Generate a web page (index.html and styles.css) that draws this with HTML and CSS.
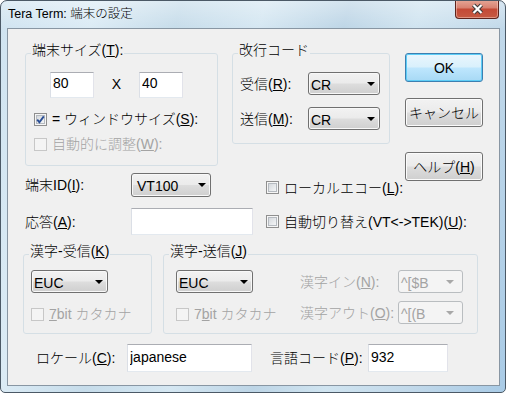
FILE: index.html
```html
<!DOCTYPE html>
<html lang="ja">
<head>
  <meta charset="UTF-8">
  <meta name="viewport" content="width=device-width, initial-scale=1.0">
  <title>Tera Term: 端末の設定</title>
  <link rel="stylesheet" href="styles.css">
</head>
<body>
  <div class="window">
    <div class="titlebar">
      <span class="title">Tera Term: 端末の設定</span>
      <button class="close" aria-label="閉じる">
        <svg width="13" height="12" viewBox="0 0 13 12">
          <path d="M2.5 2 10.5 10 M10.5 2 2.5 10" stroke="#3a3a3a" stroke-width="4.2"/>
          <path d="M2.5 2 10.5 10 M10.5 2 2.5 10" stroke="#fff" stroke-width="2.2"/>
        </svg>
      </button>
    </div>

    <div class="client">
      <div class="top">
        <div class="main">
          <div class="groups">
            <fieldset class="group size-group">
              <legend>端末サイズ(<u>T</u>):</legend>
              <div class="group-body">
                <div class="size-row">
                  <input class="edit size-edit" type="text" value="80">
                  <span class="times">X</span>
                  <input class="edit size-edit" type="text" value="40">
                </div>
                <label class="check-row win-size"><span class="check"><svg width="11" height="11" viewBox="0 0 11 11"><path d="M2.2 5.6 4.4 8.2 8.8 2.4" fill="none" stroke="#2b4f95" stroke-width="1.9"/></svg></span><span>= ウィンドウサイズ(<u>S</u>):</span></label>
                <label class="check-row auto-size disabled"><span class="check"></span><span>自動的に調整(<u>W</u>):</span></label>
              </div>
            </fieldset>

            <fieldset class="group nl-group">
              <legend>改行コード</legend>
              <div class="group-body nl-grid">
                <span>受信(<u>R</u>):</span>
                <div class="combo nl-combo"><span>CR</span><i class="arrow"></i></div>
                <span>送信(<u>M</u>):</span>
                <div class="combo nl-combo"><span>CR</span><i class="arrow"></i></div>
              </div>
            </fieldset>
          </div>

          <div class="id-grid">
            <span>端末ID(<u>I</u>):</span>
            <div class="combo id-combo"><span>VT100</span><i class="arrow"></i></div>
            <label class="check-row echo"><span class="check"></span><span>ローカルエコー(<u>L</u>):</span></label>

            <span>応答(<u>A</u>):</span>
            <input class="edit answer-edit" type="text" value="">
            <label class="check-row"><span class="check"></span><span>自動切り替え(VT&lt;-&gt;TEK)(<u>U</u>):</span></label>
          </div>
        </div>

        <div class="buttons">
          <button class="btn btn-default">OK</button>
          <button class="btn">キャンセル</button>
          <button class="btn btn-help">ヘルプ(<u>H</u>)</button>
        </div>
      </div>

      <div class="kanji">
        <fieldset class="group kanji-in">
          <legend>漢字-受信(<u>K</u>)</legend>
          <div class="group-body kanji-grid">
            <div class="combo kanji-combo"><span>EUC</span><i class="arrow"></i></div>
            <label class="check-row kanji-check disabled"><span class="check"></span><span><u>7</u>bit カタカナ</span></label>
          </div>
        </fieldset>

        <fieldset class="group kanji-out">
          <legend>漢字-送信(<u>J</u>)</legend>
          <div class="group-body kanji-grid">
            <div class="combo kanji-combo"><span>EUC</span><i class="arrow"></i></div>
            <span class="disabled">漢字イン(<u>N</u>):</span>
            <div class="combo esc-combo disabled"><span>^[$B</span><i class="arrow"></i></div>
            <label class="check-row kanji-check disabled"><span class="check"></span><span>7<u>b</u>it カタカナ</span></label>
            <span class="disabled">漢字アウト(<u>O</u>):</span>
            <div class="combo esc-combo disabled"><span>^[(B</span><i class="arrow"></i></div>
          </div>
        </fieldset>
      </div>

      <div class="bottom-row">
        <span class="locale-label">ロケール(<u>C</u>):</span>
        <input class="edit locale-edit" type="text" value="japanese">
        <span class="code-label">言語コード(<u>P</u>):</span>
        <input class="edit code-edit" type="text" value="932">
      </div>
    </div>
  </div>
</body>
</html>
```

FILE: styles.css
```css
*, *::before, *::after {
  box-sizing: border-box;
}
html, body {
  margin: 0;
  background: #ffffff;
}
body {
  font-family: "Liberation Sans", "Noto Sans CJK JP", sans-serif;
  font-size: 14px;
  font-weight: 300;
  line-height: 16px;
  color: #000000;
}
u {
  text-decoration: underline;
}

/* window frame */
.window {
  width: 506px;
  height: 393px;
  display: flex;
  flex-direction: column;
  border: 1px solid #4b5966;
  border-radius: 7px 7px 5px 5px;
  overflow: hidden;
  background:
    linear-gradient(to bottom, rgba(255, 255, 255, 0.35), rgba(255, 255, 255, 0) 28px),
    linear-gradient(104deg, #cfe3f0 0%, #dbebf5 16%, #c6dcea 30%, #d5e7f2 44%, #bdd5e6 58%, #d0e4f0 70%, #c2d9ea 84%, #a9cbe6 100%);
}
.titlebar {
  height: 27px;
  display: flex;
  align-items: flex-start;
  justify-content: space-between;
}
.title {
  padding: 5px 0 0 7px;
  font-size: 12.5px;
  line-height: 16px;
}
.close {
  width: 44px;
  height: 19px;
  margin: -1px 6px 0 0;
  padding: 0;
  display: flex;
  align-items: center;
  justify-content: center;
  border: 1px solid #5e241c;
  border-top: none;
  border-radius: 0 0 4px 4px;
  background: linear-gradient(#e6a797 0%, #d98372 42%, #c44a36 52%, #c65a42 100%);
  box-shadow: inset 0 0 0 1px rgba(255, 220, 210, 0.45);
}

/* dialog area */
.client {
  flex: 1;
  margin: 0 5px 6px 6px;
  border: 1px solid #8896a3;
  background: #f0f0f0;
}
.top {
  display: flex;
  align-items: flex-start;
  padding: 13px 0 0 17px;
}
.main {
  width: 365px;
  flex: none;
}
.groups {
  display: flex;
  align-items: flex-start;
  gap: 14px;
}

/* group boxes */
.group {
  margin: 0;
  padding: 0;
  min-width: 0;
  border: 1px solid #d5dfe5;
  border-radius: 3px;
}
.group legend {
  margin-left: 5px;
  padding: 0 1px 6px;
  white-space: nowrap;
}
.size-group {
  width: 193px;
}
.size-group .group-body {
  padding: 8px 0 13px 8px;
}
.size-row {
  display: flex;
  padding-left: 16px;
}
.times {
  width: 45px;
  text-align: center;
  padding-top: 4px;
}
.win-size {
  margin-top: 13px;
}
.auto-size {
  margin-top: 9px;
}
.nl-group {
  width: 158px;
}
.nl-grid {
  display: grid;
  grid-template-columns: 68px 72px;
  grid-template-rows: 23px 23px;
  row-gap: 12px;
  align-items: center;
  padding: 8px 0 13px 7px;
}

/* terminal id / answerback */
.id-grid {
  display: grid;
  grid-template-columns: 93px 122px auto;
  grid-template-rows: 24px 27px;
  column-gap: 13px;
  row-gap: 11px;
  align-items: center;
  margin-top: 7px;
  white-space: nowrap;
}
.echo {
  padding-top: 5px;
}

/* buttons */
.buttons {
  width: 78px;
  flex: none;
  display: flex;
  flex-direction: column;
  gap: 16px;
  margin: 11px 0 0 15px;
}
.btn {
  height: 29px;
  padding: 0;
  font: inherit;
  color: #000000;
  border: 1px solid #707070;
  border-radius: 3px;
  background: linear-gradient(#f2f2f2 0%, #ebebeb 48%, #dddddd 52%, #cfcfcf 100%);
  box-shadow: inset 0 0 0 1px #fbfbfb;
  white-space: nowrap;
}
.btn-default {
  border-color: #3c7fb1;
  background: linear-gradient(#eaf6fd 0%, #d9f0fc 48%, #bee6fd 52%, #a7d9f5 100%);
  box-shadow: inset 0 0 0 1px #5dcdf6;
}
.btn-help {
  margin-top: 9px;
}

/* kanji groups */
.kanji {
  display: flex;
  gap: 11px;
  margin: 8px 0 0 15px;
}
.kanji-in {
  width: 129px;
}
.kanji-out {
  width: 315px;
}
.kanji-grid {
  display: grid;
  grid-template-rows: 23px 23px;
  row-gap: 8px;
  align-items: center;
  padding: 5px 0 9px 7px;
}
.kanji-out .kanji-grid {
  grid-template-columns: 124px 98px 65px;
  padding-left: 12px;
}
.kanji-check {
  padding-top: 3px;
}

/* bottom row */
.bottom-row {
  display: flex;
  align-items: center;
  margin: 10px 0 0 28px;
}
.locale-label {
  width: 91px;
}
.code-label {
  width: 98px;
  margin-left: 18px;
}

/* controls */
.edit {
  display: block;
  margin: 0;
  font: inherit;
  line-height: 16px;
  color: #000000;
  background: #ffffff;
  border: 1px solid;
  border-color: #abadb3 #e2e3ea #e3e9ef #dbdfe6;
  padding: 2px 2px 6px;
  outline: none;
}
.size-edit {
  width: 44px;
  height: 26px;
}
.answer-edit {
  width: 122px;
  height: 27px;
  padding-top: 3px;
  padding-bottom: 6px;
}
.locale-edit,
.code-edit {
  height: 28px;
  padding-top: 4px;
  padding-bottom: 6px;
}
.locale-edit {
  width: 125px;
}
.code-edit {
  width: 80px;
}

.combo {
  display: flex;
  align-items: center;
  justify-content: space-between;
  height: 23px;
  padding: 2px 4px 0 2px;
  border: 1px solid #707070;
  border-radius: 3px;
  background: linear-gradient(#f2f2f2 0%, #ebebeb 48%, #dddddd 52%, #cfcfcf 100%);
  box-shadow: inset 0 0 0 1px #f8f8f8;
  white-space: nowrap;
}
.arrow {
  width: 0;
  height: 0;
  margin-top: -2px;
  border-left: 4px solid transparent;
  border-right: 4px solid transparent;
  border-top: 4px solid #000000;
}
.nl-combo {
  width: 72px;
}
.id-combo {
  width: 80px;
  height: 24px;
  padding-left: 5px;
}
.kanji-combo {
  width: 77px;
}
.esc-combo {
  width: 65px;
}
.combo.disabled {
  border-color: #b9bdc0;
  background: #f4f4f4;
  box-shadow: none;
  padding-right: 8px;
}
.combo.disabled .arrow {
  border-top-color: #a8a8a8;
}

/* checkboxes */
.check-row {
  display: flex;
  align-items: center;
  gap: 5px;
  white-space: nowrap;
}
.check {
  width: 13px;
  height: 13px;
  flex: none;
  display: flex;
  align-items: center;
  justify-content: center;
  border: 1px solid #8f8f8f;
  background: linear-gradient(135deg, #cdd1d6 0%, #eef0f2 70%, #fbfbfb 100%);
  box-shadow: inset 0 0 0 1px #f6f6f6, inset 0 0 0 2px #b5bac0;
}
.check svg {
  display: block;
}

.disabled {
  color: #a3a3a3;
}
.disabled .check {
  border-color: #c7c7c7;
  background: #f4f4f4;
  box-shadow: none;
}
```
